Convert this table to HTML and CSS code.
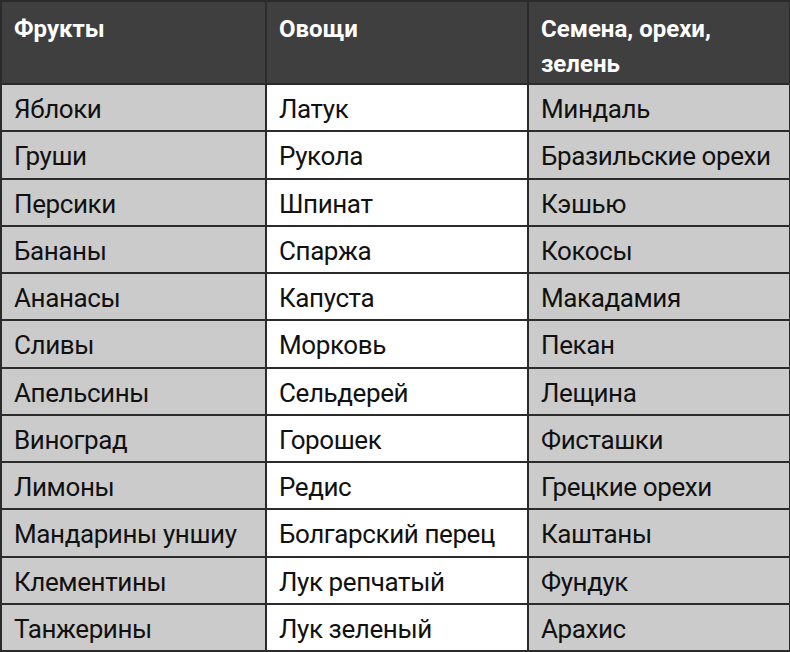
FILE: index.html
```html
<!DOCTYPE html>
<html lang="ru">
<head>
<meta charset="utf-8">
<link rel="stylesheet" href="styles.css">
</head>
<body>
<table class="produce">
  <colgroup>
    <col class="c1"><col class="c2"><col class="c3">
  </colgroup>
  <thead>
    <tr><th>Фрукты</th><th>Овощи</th><th>Семена, орехи, зелень</th></tr>
  </thead>
  <tbody>
    <tr><td>Яблоки</td><td>Латук</td><td>Миндаль</td></tr>
    <tr><td>Груши</td><td>Рукола</td><td>Бразильские орехи</td></tr>
    <tr><td>Персики</td><td>Шпинат</td><td>Кэшью</td></tr>
    <tr><td>Бананы</td><td>Спаржа</td><td>Кокосы</td></tr>
    <tr><td>Ананасы</td><td>Капуста</td><td>Макадамия</td></tr>
    <tr><td>Сливы</td><td>Морковь</td><td>Пекан</td></tr>
    <tr><td>Апельсины</td><td>Сельдерей</td><td>Лещина</td></tr>
    <tr><td>Виноград</td><td>Горошек</td><td>Фисташки</td></tr>
    <tr><td>Лимоны</td><td>Редис</td><td>Грецкие орехи</td></tr>
    <tr><td>Мандарины уншиу</td><td>Болгарский перец</td><td>Каштаны</td></tr>
    <tr><td>Клементины</td><td>Лук репчатый</td><td>Фундук</td></tr>
    <tr><td>Танжерины</td><td>Лук зеленый</td><td>Арахис</td></tr>
  </tbody>
</table>
</body>
</html>
```
FILE: styles.css
```css
html, body {
  margin: 0;
  padding: 0;
  background: #ffffff;
}
.produce {
  width: 789px;
  border-collapse: collapse;
  table-layout: fixed;
  font-family: Roboto, "Liberation Sans", sans-serif;
  color: #111111;
}
.c1 { width: 265px; }
.c2 { width: 262px; }
.c3 { width: 262px; }
.produce th,
.produce td {
  border: 2px solid #2b2b2b;
  text-align: left;
  padding: 0 12px;
}
.produce thead tr {
  height: 83px;
}
.produce th {
  background: #3f3f3f;
  color: #ffffff;
  font-weight: 700;
  font-size: 24px;
  line-height: 35px;
  vertical-align: top;
  padding-top: 10px;
  padding-bottom: 0;
}
.produce tbody tr {
  height: 47.25px;
}
.produce td {
  font-size: 26px;
  line-height: 30px;
  letter-spacing: -0.4px;
  vertical-align: middle;
  padding-top: 3px;
  padding-bottom: 0;
}
.produce td:nth-child(1),
.produce td:nth-child(3) {
  background: #cbcbcb;
}
.produce td:nth-child(2) {
  background: #ffffff;
}
```
